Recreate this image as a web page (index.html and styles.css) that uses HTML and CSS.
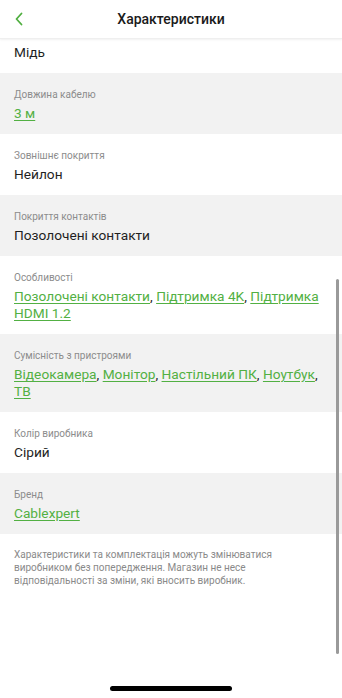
FILE: index.html
```html
<!DOCTYPE html>
<html lang="uk">
<head>
    <meta charset="UTF-8">
    <meta name="viewport" content="width=device-width, initial-scale=1.0">
    <title>Характеристики</title>
    <link rel="stylesheet" href="styles.css">
</head>
<body>
    <div class="header">
        <a class="back" href="#">
            <svg width="10" height="14" viewBox="0 0 10 14"><path d="M7.5 1.5 L2.5 7 L7.5 12.5" fill="none" stroke="#4fae3f" stroke-width="1.8" stroke-linecap="round" stroke-linejoin="round"/></svg>
        </a>
        <div class="title">Характеристики</div>
    </div>

    <div class="specs">
        <div class="spec">
            <div class="spec-label">Матеріал провідника</div>
            <div class="spec-value">Мідь</div>
        </div>
        <div class="spec">
            <div class="spec-label">Довжина кабелю</div>
            <div class="spec-value"><a href="#">3 м</a></div>
        </div>
        <div class="spec">
            <div class="spec-label">Зовнішнє покриття</div>
            <div class="spec-value">Нейлон</div>
        </div>
        <div class="spec">
            <div class="spec-label">Покриття контактів</div>
            <div class="spec-value">Позолочені контакти</div>
        </div>
        <div class="spec">
            <div class="spec-label">Особливості</div>
            <div class="spec-value"><a href="#">Позолочені контакти</a>, <a href="#">Підтримка 4K</a>, <a href="#">Підтримка HDMI 1.2</a></div>
        </div>
        <div class="spec">
            <div class="spec-label">Сумісність з пристроями</div>
            <div class="spec-value"><a href="#">Відеокамера</a>, <a href="#">Монітор</a>, <a href="#">Настільний ПК</a>, <a href="#">Ноутбук</a>, <a href="#">ТВ</a></div>
        </div>
        <div class="spec">
            <div class="spec-label">Колір виробника</div>
            <div class="spec-value">Сірий</div>
        </div>
        <div class="spec">
            <div class="spec-label">Бренд</div>
            <div class="spec-value"><a href="#">Cablexpert</a></div>
        </div>
        <p class="note">Характеристики та комплектація можуть змінюватися виробником без попередження. Магазин не несе відповідальності за зміни, які вносить виробник.</p>
    </div>

    <div class="scrollbar"></div>
    <div class="home-indicator"></div>
</body>
</html>
```

FILE: styles.css
```css
body {
    font-family: Roboto, "Noto Sans", sans-serif;
    background: #fff;
    margin: 0;
    width: 342px;
    height: 698px;
    overflow: hidden;
    position: relative;
    color: #1f1f1f;
}
.header {
    position: absolute;
    top: 0;
    left: 0;
    right: 0;
    height: 38px;
    background: #fff;
    box-shadow: 0 1px 2px rgba(0, 0, 0, 0.06);
    border-bottom: 1px solid #efefef;
    display: flex;
    align-items: center;
    justify-content: center;
    z-index: 2;
}
.back {
    position: absolute;
    left: 14px;
    top: 12px;
    display: flex;
}
.title {
    font-size: 14px;
    font-weight: 500;
    color: #1a1a1a;
}
.specs {
    padding-top: 12px;
}
.spec {
    padding: 14px 14px 12px;
}
.spec:nth-child(even) {
    background: #f2f2f2;
}
.spec-label {
    font-size: 10px;
    line-height: 16px;
    color: #8c8c8c;
    margin-bottom: 2px;
}
.spec-value {
    font-size: 13.7px;
    line-height: 17px;
    color: #1f1f1f;
}
.spec-value a {
    color: #52b043;
    text-decoration: underline;
    text-underline-offset: 2px;
}
.note {
    margin: 0;
    padding: 14px 14px 0;
    font-size: 10px;
    line-height: 13px;
    color: #8a8a8a;
}
.scrollbar {
    position: absolute;
    right: 3px;
    top: 279px;
    width: 3px;
    height: 375px;
    border-radius: 2px;
    background: #9a9a9a;
}
.home-indicator {
    position: absolute;
    left: 110px;
    bottom: 7px;
    width: 122px;
    height: 5px;
    border-radius: 3px;
    background: #000;
}
```
